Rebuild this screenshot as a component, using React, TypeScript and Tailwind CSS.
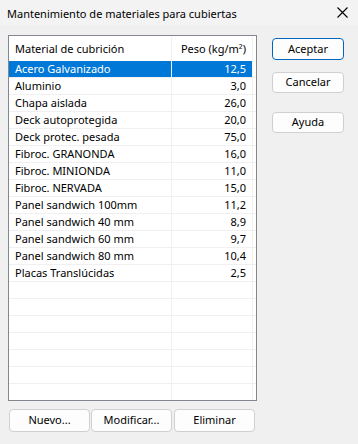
const rows: [string, string][] = [
  ["Acero Galvanizado", "12,5"],
  ["Aluminio", "3,0"],
  ["Chapa aislada", "26,0"],
  ["Deck autoprotegida", "20,0"],
  ["Deck protec. pesada", "75,0"],
  ["Fibroc. GRANONDA", "16,0"],
  ["Fibroc. MINIONDA", "11,0"],
  ["Fibroc. NERVADA", "15,0"],
  ["Panel sandwich 100mm", "11,2"],
  ["Panel sandwich 40 mm", "8,9"],
  ["Panel sandwich 60 mm", "9,7"],
  ["Panel sandwich 80 mm", "10,4"],
  ["Placas Translúcidas", "2,5"],
];

const empties = Array.from({ length: 7 });

function Btn({ label, primary = false, className = "" }: { label: string; primary?: boolean; className?: string }) {
  return (
    <button
      className={`flex items-center justify-center rounded-[4px] bg-[#fdfdfd] text-[11px] text-black border ${
        primary ? "border-[#0067c0]" : "border-[#d0d0d0]"
      } ${className}`}
    >
      {label}
    </button>
  );
}

export default function App() {
  return (
    <div
      className="w-[358px] h-[444px] bg-[#f0f0f0] flex flex-col text-black overflow-hidden"
      style={{ fontFamily: '"Segoe UI", "Noto Sans", sans-serif' }}
    >
      {/* title bar */}
      <div className="h-[25px] bg-[#f3f3f3] flex items-center justify-between pl-[7px] pr-[9px]">
        <span className="text-[11px] leading-none pt-[1px]">Mantenimiento de materiales para cubiertas</span>
        <svg width="11" height="11" viewBox="0 0 11 11" className="mr-[1px]">
          <path d="M0.5 0.5 L10.5 10.5 M10.5 0.5 L0.5 10.5" stroke="#000" strokeWidth="1.1" />
        </svg>
      </div>

      <div className="flex pl-[8px] pt-[10px]">
        {/* list view */}
        <div className="w-[249px] h-[366px] border border-[#828790] bg-white overflow-hidden flex flex-col text-[11px]">
          <div className="flex h-[25px] shrink-0">
            <div className="w-[163px] flex items-center pl-[6px] pt-[1px] border-r border-[#f0f0f0]">Material de cubrición</div>
            <div className="w-[81px] flex items-center justify-end pr-[6px] pt-[1px] border-r border-[#f0f0f0]">Peso (kg/m²)</div>
          </div>
          {rows.map(([name, peso], i) => {
            const sel = i === 0;
            return (
              <div key={name} className="flex h-[17px] shrink-0 border-b border-[#f0f0f0]">
                <div
                  className={`w-[163px] flex items-center pl-[6px] pt-[1px] border-r ${
                    sel ? "bg-[#0078d7] text-white border-[#f0f0f0]" : "border-[#f0f0f0]"
                  }`}
                >
                  {name}
                </div>
                <div
                  className={`w-[81px] flex items-center justify-end pr-[6px] pt-[1px] border-r border-[#f0f0f0] ${
                    sel ? "bg-[#0078d7] text-white" : ""
                  }`}
                >
                  {peso}
                </div>
              </div>
            );
          })}
          {empties.map((_, i) => (
            <div key={i} className="flex h-[17px] shrink-0 border-b border-[#f0f0f0]">
              <div className="w-[163px] border-r border-[#f0f0f0]" />
              <div className="w-[81px] border-r border-[#f0f0f0]" />
            </div>
          ))}
        </div>

        {/* side buttons */}
        <div className="flex flex-col ml-[15px] pt-[3px]">
          <Btn label="Aceptar" primary className="w-[72px] h-[22px]" />
          <Btn label="Cancelar" className="w-[72px] h-[21px] mt-[12px]" />
          <Btn label="Ayuda" className="w-[72px] h-[21px] mt-[19px]" />
        </div>
      </div>

      <div className="flex pl-[9px] pt-[8px]">
        <Btn label="Nuevo..." className="w-[81px] h-[23px]" />
        <Btn label="Modificar..." className="w-[81px] h-[23px] ml-[1px]" />
        <Btn label="Eliminar" className="w-[81px] h-[23px] ml-[2px]" />
      </div>
    </div>
  );
}
